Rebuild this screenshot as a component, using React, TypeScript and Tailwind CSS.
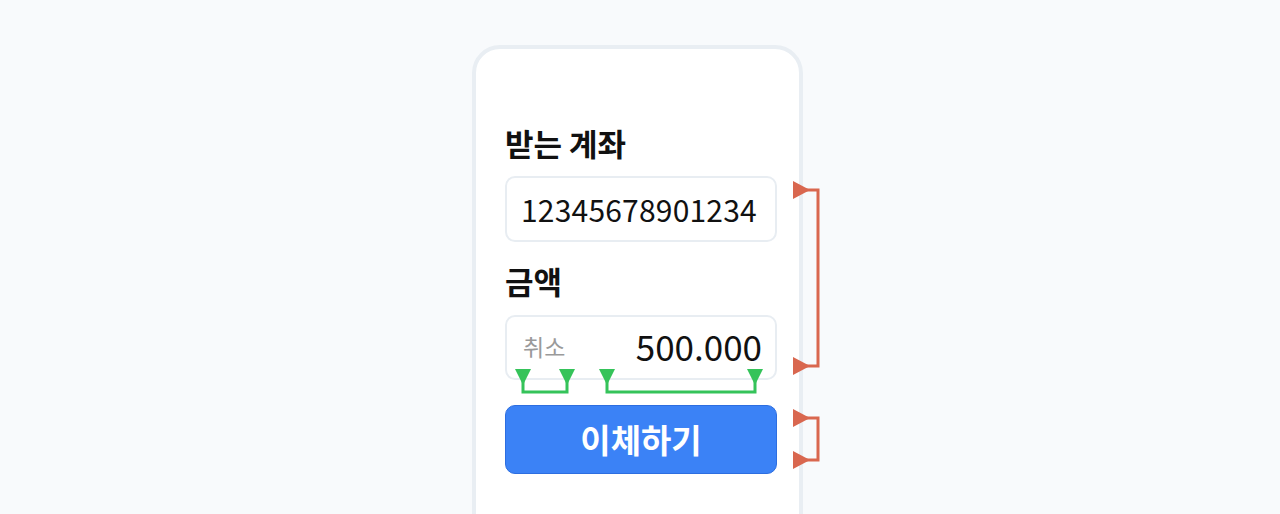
const font = "font-['Noto_Sans_CJK_KR','Noto_Sans',sans-serif]";

function Marks() {
  const red = "#d9674f";
  const green = "#35c35a";
  const rightTri = (y: number) => `793,${y - 9} 810,${y} 793,${y + 9}`;
  const downTri = (x: number) => `${x - 8},369 ${x + 8},369 ${x},385`;
  return (
    <svg className="absolute left-0 top-0 pointer-events-none" width="1280" height="514" viewBox="0 0 1280 514">
      <g fill={red}>
        <polygon points={rightTri(190)} />
        <polygon points={rightTri(366)} />
        <polygon points={rightTri(418)} />
        <polygon points={rightTri(460)} />
      </g>
      <g fill="none" stroke={red} strokeWidth="3">
        <polyline points="806,190 818,190 818,366 806,366" />
        <polyline points="806,418 818,418 818,460 806,460" />
      </g>
      <g fill={green}>
        <polygon points={downTri(523)} />
        <polygon points={downTri(567)} />
        <polygon points={downTri(607)} />
        <polygon points={downTri(755)} />
      </g>
      <g fill="none" stroke={green} strokeWidth="3">
        <polyline points="523,380 523,392 567,392 567,380" />
        <polyline points="607,380 607,392 755,392 755,380" />
      </g>
    </svg>
  );
}

export default function App() {
  return (
    <div className={`relative w-[1280px] h-[514px] overflow-hidden bg-[#f8fafc] ${font}`}>
      <div className="ml-[472px] mt-[45px] w-[331px] h-[520px] rounded-[28px] border-4 border-[#e9eef3] bg-white pl-[29px] pt-[74px]">
        <div className="w-[272px] flex flex-col">
          <h2 className="text-[31px] leading-[40px] font-bold text-[#111111]">받는 계좌</h2>
          <div className="mt-[13px] h-[66px] rounded-[10px] border-2 border-[#e8edf2] flex items-center px-[14px]">
            <span className="text-[30px] text-[#111111] tracking-[0.2px]">12345678901234</span>
          </div>
          <h2 className="mt-[19px] text-[31px] leading-[40px] font-bold text-[#111111]">금액</h2>
          <div className="mt-[14px] h-[65px] rounded-[10px] border-2 border-[#e8edf2] flex items-center justify-between pl-[16px] pr-[13px]">
            <span className="text-[23px] text-[#9a9a9a] -mt-[2px]">취소</span>
            <span className="text-[35px] text-[#111111] -mt-[3px]">500.000</span>
          </div>
          <button className="mt-[25px] h-[69px] rounded-[10px] border border-[#2d6ee0] bg-[#3b82f6] text-white text-[33px] font-bold flex items-center justify-center">
            이체하기
          </button>
        </div>
      </div>
      <Marks />
    </div>
  );
}
